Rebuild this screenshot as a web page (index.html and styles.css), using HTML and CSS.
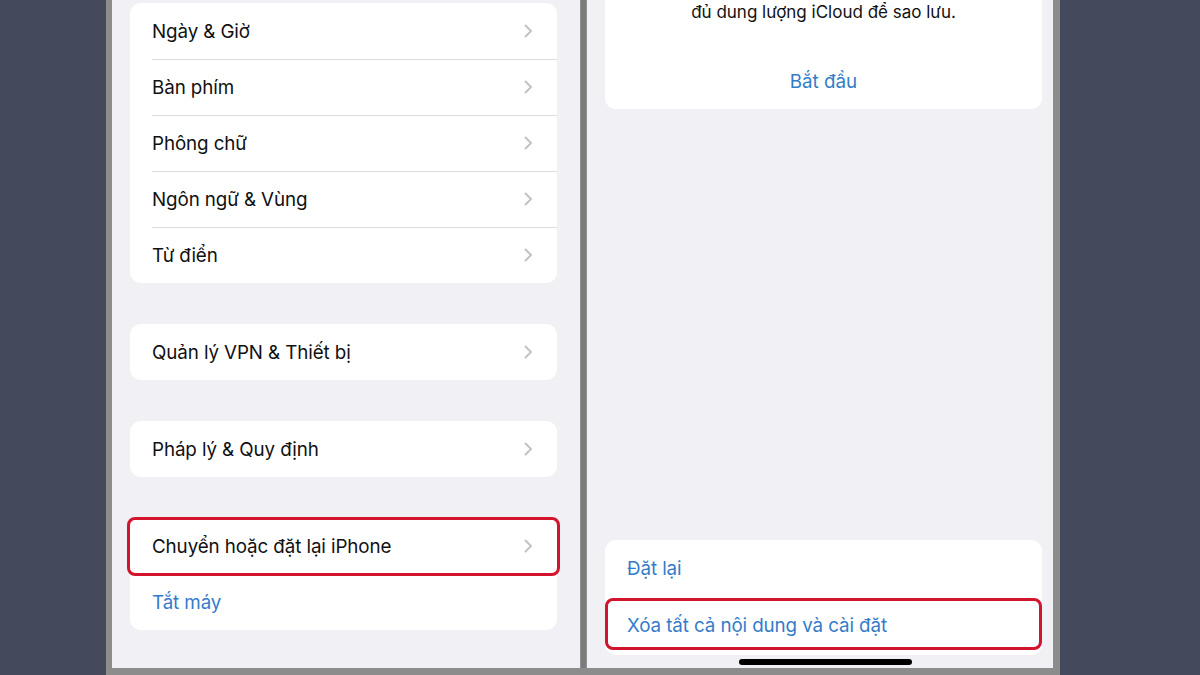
FILE: index.html
```html
<!DOCTYPE html>
<html lang="vi">
<head>
  <meta charset="UTF-8">
  <meta name="viewport" content="width=device-width, initial-scale=1.0">
  <title>Chuyển hoặc đặt lại iPhone</title>
  <link rel="stylesheet" href="styles.css">
</head>
<body>
  <div id="frame">
    <div class="screen screen-left">
      <div class="group first">
        <div class="row"><span>Ngày &amp; Giờ</span><svg class="chev" width="9" height="14" viewBox="0 0 9 14"><path d="M1.5 1.5 L7 7 L1.5 12.5"></path></svg></div>
        <div class="row"><span>Bàn phím</span><svg class="chev" width="9" height="14" viewBox="0 0 9 14"><path d="M1.5 1.5 L7 7 L1.5 12.5"></path></svg></div>
        <div class="row"><span>Phông chữ</span><svg class="chev" width="9" height="14" viewBox="0 0 9 14"><path d="M1.5 1.5 L7 7 L1.5 12.5"></path></svg></div>
        <div class="row"><span>Ngôn ngữ &amp; Vùng</span><svg class="chev" width="9" height="14" viewBox="0 0 9 14"><path d="M1.5 1.5 L7 7 L1.5 12.5"></path></svg></div>
        <div class="row"><span>Từ điển</span><svg class="chev" width="9" height="14" viewBox="0 0 9 14"><path d="M1.5 1.5 L7 7 L1.5 12.5"></path></svg></div>
      </div>

      <div class="group">
        <div class="row"><span>Quản lý VPN &amp; Thiết bị</span><svg class="chev" width="9" height="14" viewBox="0 0 9 14"><path d="M1.5 1.5 L7 7 L1.5 12.5"></path></svg></div>
      </div>

      <div class="group">
        <div class="row"><span>Pháp lý &amp; Quy định</span><svg class="chev" width="9" height="14" viewBox="0 0 9 14"><path d="M1.5 1.5 L7 7 L1.5 12.5"></path></svg></div>
      </div>

      <div class="group">
        <div class="row marked marked-left"><span>Chuyển hoặc đặt lại iPhone</span><svg class="chev" width="9" height="14" viewBox="0 0 9 14"><path d="M1.5 1.5 L7 7 L1.5 12.5"></path></svg></div>
        <div class="row link"><span>Tắt máy</span></div>
      </div>
    </div>

    <div class="divider"></div>

    <div class="screen screen-right">
      <div class="group backup">
        <p class="note">đủ dung lượng iCloud để sao lưu.</p>
        <p class="start">Bắt đầu</p>
      </div>

      <div class="group reset">
        <div class="row link"><span>Đặt lại</span></div>
        <div class="row link marked marked-right"><span>Xóa tất cả nội dung và cài đặt</span></div>
      </div>

      <div class="home-bar"></div>
    </div>
  </div>
</body>
</html>
```

FILE: styles.css
```css
body {
  margin: 0;
  padding: 0;
  height: 675px;
  overflow: hidden;
  background-color: #444a5b;
  font-family: 'Inter', 'Noto Sans', sans-serif;
  color: #111;
}

#frame {
  display: flex;
  width: 954px;
  height: 675px;
  margin-left: 106px;
  box-sizing: border-box;
  padding: 0 7px 7px 6px;
  background-color: #8c8c8c;
}

.divider {
  width: 7px;
  background-color: #7c7c7c;
  border-left: 1px solid #909090;
  border-right: 1px solid #909090;
  box-sizing: border-box;
}

.screen {
  background-color: #f0f0f5;
  display: flex;
  flex-direction: column;
}

.screen-left {
  width: 468px;
  padding: 3px 23px 0 18px;
  box-sizing: border-box;
}

.screen-right {
  width: 466px;
  padding: 0 11px 0 18px;
  box-sizing: border-box;
}

.group {
  background-color: #fff;
  border-radius: 11px;
  margin-bottom: 41px;
}

.group:last-child {
  margin-bottom: 0;
}

.row {
  position: relative;
  display: flex;
  align-items: center;
  justify-content: space-between;
  height: 56px;
  padding: 0 24px 0 22px;
  font-size: 18.8px;
  letter-spacing: -0.1px;
}

.row + .row::before {
  content: '';
  position: absolute;
  top: 0;
  left: 22px;
  right: 0;
  border-top: 1px solid #dcdce0;
}

.marked + .row::before,
.row.marked::before {
  display: none;
}

.chev {
  fill: none;
  stroke: #c3c3c7;
  stroke-width: 2;
  stroke-linecap: round;
  stroke-linejoin: round;
}

.link {
  color: #347cc9;
}

.marked::after {
  content: '';
  position: absolute;
  border: 3px solid #d3142d;
  border-radius: 8px;
}

.marked-left::after {
  top: -1px;
  bottom: -2px;
  left: -3px;
  right: -3px;
}

.marked-right::after {
  top: 1px;
  bottom: 5px;
  left: 0;
  right: 0;
}

.group.backup {
  height: 109px;
  border-radius: 0 0 11px 11px;
  margin: 0;
  text-align: center;
  display: flex;
  flex-direction: column;
  align-items: center;
}

.note {
  margin: 1px 0 0;
  font-size: 17px;
  line-height: 22px;
}

.start {
  margin: 48px 0 0;
  font-size: 18.8px;
  line-height: 22px;
  color: #347cc9;
}

.group.reset {
  margin-top: auto;
  margin-bottom: 0;
}

.reset .row:first-child {
  height: 57px;
}

.reset .row:last-child {
  height: 58px;
  padding-bottom: 2px;
  box-sizing: border-box;
}

.home-bar {
  align-self: center;
  width: 173px;
  height: 6px;
  border-radius: 3px;
  background-color: #000;
  margin: 4px 0 3px 4px;
}
```
